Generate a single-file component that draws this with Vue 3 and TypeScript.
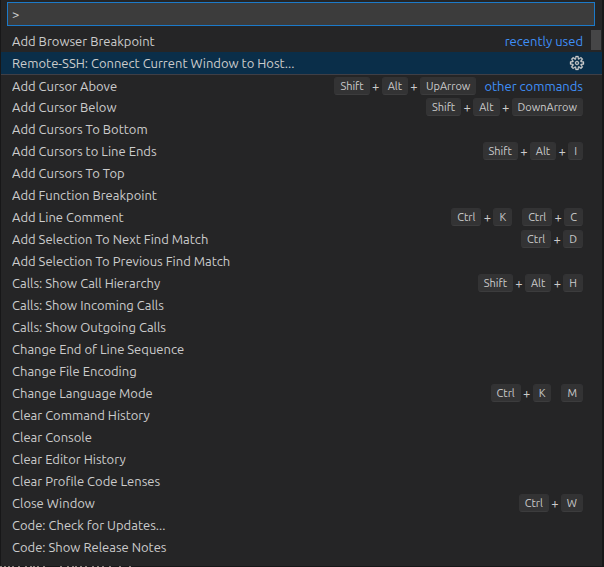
<script setup lang="ts">
import { ref } from 'vue'

type Chord = string[]

interface Command {
  label: string
  keys?: Chord[]
  group?: string
  separated?: boolean
}

const query = ref('>')
const active = ref(1)

const commands: Command[] = [
  { label: 'Add Browser Breakpoint', group: 'recently used' },
  { label: 'Remote-SSH: Connect Current Window to Host...' },
  { label: 'Add Cursor Above', keys: [['Shift', 'Alt', 'UpArrow']], group: 'other commands', separated: true },
  { label: 'Add Cursor Below', keys: [['Shift', 'Alt', 'DownArrow']] },
  { label: 'Add Cursors To Bottom' },
  { label: 'Add Cursors to Line Ends', keys: [['Shift', 'Alt', 'I']] },
  { label: 'Add Cursors To Top' },
  { label: 'Add Function Breakpoint' },
  { label: 'Add Line Comment', keys: [['Ctrl', 'K'], ['Ctrl', 'C']] },
  { label: 'Add Selection To Next Find Match', keys: [['Ctrl', 'D']] },
  { label: 'Add Selection To Previous Find Match' },
  { label: 'Calls: Show Call Hierarchy', keys: [['Shift', 'Alt', 'H']] },
  { label: 'Calls: Show Incoming Calls' },
  { label: 'Calls: Show Outgoing Calls' },
  { label: 'Change End of Line Sequence' },
  { label: 'Change File Encoding' },
  { label: 'Change Language Mode', keys: [['Ctrl', 'K'], ['M']] },
  { label: 'Clear Command History' },
  { label: 'Clear Console' },
  { label: 'Clear Editor History' },
  { label: 'Clear Profile Code Lenses' },
  { label: 'Close Window', keys: [['Ctrl', 'W']] },
  { label: 'Code: Check for Updates...' },
  { label: 'Code: Show Release Notes' },
]

// Tips of the editor line that shows under the palette's lower edge.
const tips = [1, 5, 9, 13, 19, 26, 31, 34, 38, 44, 61, 68, 73, 76, 81, 86, 93, 98, 103, 110, 120, 130]
const tipsPath = tips.map((x) => `M${x - 1} 0h2v1h-2z`).join('')
</script>

<template>
  <main class="palette">
    <div class="search">
      <input v-model="query" class="query" type="text" aria-label="Command" spellcheck="false" />
    </div>
    <div class="results">
      <ul class="list">
        <li
          v-for="(command, index) in commands"
          :key="command.label"
          class="row"
          :class="{ active: index === active, separated: command.separated }"
        >
          <button class="label" type="button" @click="active = index">{{ command.label }}</button>
          <span v-if="command.keys" class="binding">
            <span v-for="(chord, c) in command.keys" :key="c" class="chord">
              <template v-for="(key, k) in chord" :key="k">
                <span v-if="k > 0" class="plus">+</span>
                <kbd class="key">{{ key }}</kbd>
              </template>
            </span>
          </span>
          <span v-if="command.group" class="group">{{ command.group }}</span>
          <button v-if="index === active" class="gear" type="button" aria-label="Configure Keybinding">
            <svg viewBox="0 0 16 16" width="16" height="16" fill="currentColor" aria-hidden="true">
              <path stroke="currentColor" stroke-width="0.3" fill-rule="evenodd" clip-rule="evenodd" d="M9.1 4.4L8.6 2H7.4l-.5 2.4-.7.3-2-1.3-.9.8 1.3 2-.2.7-2.4.5v1.2l2.4.5.3.8-1.3 2 .8.8 2-1.3.8.3.4 2.3h1.2l.5-2.4.8-.3 2 1.3.8-.8-1.3-2 .3-.8 2.3-.4V7.4l-2.4-.5-.3-.8 1.3-2-.8-.8-2 1.3-.7-.2zM9.4 1l.5 2.4L12 2.1l2 2-1.4 2.1 2.4.4v2.8l-2.4.5L14 12l-2 2-2.1-1.4-.5 2.4H6.6l-.5-2.4L4 13.9l-2-2 1.4-2.1L1 9.4V6.6l2.4-.5L2.1 4l2-2 2.1 1.4.4-2.4h2.8zm.6 7c0 1.1-.9 2-2 2s-2-.9-2-2 .9-2 2-2 2 .9 2 2zM8 9c.6 0 1-.4 1-1s-.4-1-1-1-1 .4-1 1 .4 1 1 1z" />
            </svg>
          </button>
        </li>
      </ul>
      <div class="track"><div class="thumb"></div></div>
    </div>
  </main>
  <svg class="tips" width="140" height="1" viewBox="0 0 140 1" aria-hidden="true">
    <path :d="tipsPath" fill="#8c8780" />
  </svg>
</template>

<style>
body {
  background: #171718;
  overflow: hidden;
}
</style>

<style scoped>
.palette {
  box-sizing: border-box;
  margin: 0 2px 0 1px;
  padding: 2px 0 8px;
  background: #252526;
  color: #cccccc;
  font-family: Ubuntu, "Noto Sans", sans-serif;
  font-size: 13px;
  line-height: 22px;
}

.search {
  display: flex;
  padding: 0 7px 4px 6px;
}

.query {
  box-sizing: border-box;
  flex: 1;
  min-width: 0;
  height: 24px;
  padding: 0 4px;
  border: 1px solid #1c7ac9;
  border-radius: 0;
  outline: none;
  background: #3c3c3c;
  color: inherit;
  font: inherit;
}

.results {
  display: grid;
}

.list,
.track {
  grid-area: 1 / 1;
}

.list {
  margin: 0;
  padding: 0;
  list-style: none;
}

.row {
  display: flex;
  align-items: center;
  box-sizing: border-box;
  height: 22px;
  padding: 0 19px 0 11px;
}

.row.active {
  background: #0a2e49;
}

.row.separated {
  border-top: 1px solid #3f3f46;
}

.label,
.gear {
  padding: 0;
  border: 0;
  background: none;
  color: inherit;
  font: inherit;
}

.label {
  flex: 1;
  min-width: 0;
  overflow: hidden;
  text-align: left;
  text-overflow: ellipsis;
  white-space: nowrap;
}

.gear {
  display: flex;
  margin-right: -2px;
}

.binding {
  display: flex;
  gap: 10px;
}

.chord {
  display: flex;
  align-items: center;
}

.plus {
  width: 12px;
  font-size: 13px;
  text-align: center;
}

.key {
  box-sizing: border-box;
  height: 18px;
  padding: 0 5px;
  border: 1px solid #333334;
  border-bottom-color: #3c3c3d;
  border-radius: 3px;
  background: #333334;
  font-family: inherit;
  font-size: 11px;
  line-height: 16px;
}

.group {
  margin-left: 8px;
  color: #3f90f8;
}

.track {
  justify-self: end;
  width: 10px;
  margin-right: 1px;
}

.thumb {
  height: 20px;
  background: #464647;
}

.tips {
  display: block;
}
</style>
